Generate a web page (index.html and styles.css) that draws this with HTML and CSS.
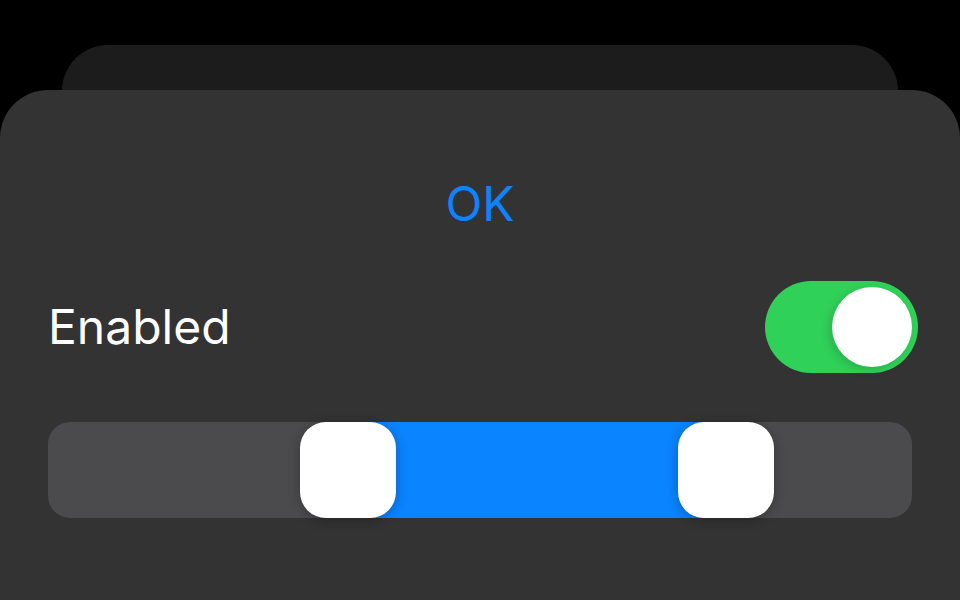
FILE: index.html
```html
<!DOCTYPE html>
<html lang="en">
<head>
  <meta charset="UTF-8">
  <title>Range Sheet</title>
  <link rel="stylesheet" href="styles.css">
</head>
<body>
  <div class="sheet-back"></div>

  <div class="sheet">
    <div class="ok-button">OK</div>

    <div class="row">
      <span class="label">Enabled</span>
      <div class="toggle on">
        <div class="knob"></div>
      </div>
    </div>

    <div class="range">
      <div class="range-fill" style="left: 300px; width: 378px;"></div>
      <div class="range-thumb" style="left: 252px;"></div>
      <div class="range-thumb" style="left: 630px;"></div>
    </div>
  </div>
</body>
</html>
```

FILE: styles.css
```css
html, body {
  margin: 0;
  padding: 0;
  height: 100%;
  overflow: hidden;
}

body {
  background: #000;
  font-family: 'Inter', 'Liberation Sans', sans-serif;
  color: #fff;
}

.sheet-back {
  margin: 45px 62px 0;
  height: 100px;
  background: #1c1c1c;
  border-radius: 46px 46px 0 0;
}

.sheet {
  position: relative;
  margin-top: -55px;
  height: 510px;
  background: #333333;
  border-radius: 48px 48px 0 0;
  padding: 85px 48px 0;
  box-sizing: border-box;
  display: flex;
  flex-direction: column;
  gap: 48px;
}

.ok-button {
  text-align: center;
  font-size: 48px;
  line-height: 58px;
  color: #0a84ff;
}

.row {
  display: flex;
  align-items: center;
  justify-content: space-between;
}

.label {
  font-size: 48px;
  line-height: 58px;
}

.toggle {
  width: 153px;
  height: 92px;
  border-radius: 46px;
  background: #4a4a4c;
  margin-right: -6px;
  display: flex;
  align-items: center;
  justify-content: flex-start;
  padding: 0 6px;
  box-sizing: border-box;
}

.toggle.on {
  background: #30d158;
  justify-content: flex-end;
}

.knob {
  width: 80px;
  height: 80px;
  border-radius: 50%;
  background: #fff;
  box-shadow: -3px 3px 10px rgba(0, 0, 0, 0.15);
}

.range {
  position: relative;
  margin-top: 1px;
  height: 96px;
  flex-shrink: 0;
  border-radius: 22px;
  background: #4b4b4d;
}

.range-fill {
  position: absolute;
  top: 0;
  bottom: 0;
  background: #0a84ff;
}

.range-thumb {
  position: absolute;
  top: 0;
  width: 96px;
  height: 96px;
  border-radius: 26px;
  background: #fff;
  box-shadow: 0 2px 12px rgba(0, 0, 0, 0.28);
}
```
